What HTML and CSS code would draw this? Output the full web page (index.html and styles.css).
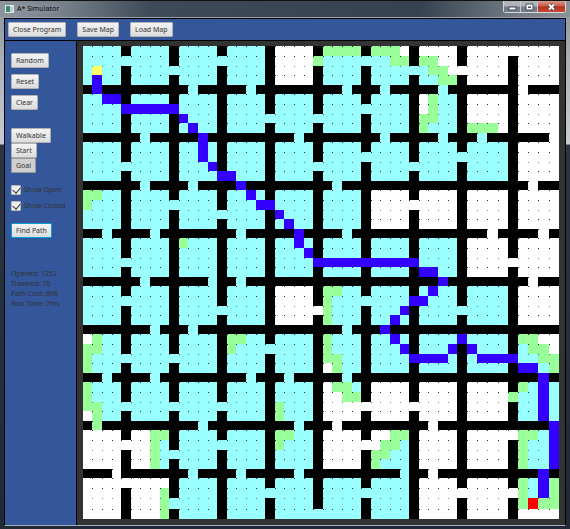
FILE: index.html
```html
<!DOCTYPE html>
<html lang="en">
<head>
<meta charset="utf-8">
<title>A* Simulator</title>
<link rel="stylesheet" href="styles.css">
</head>
<body>
<div class="window">
  <header class="titlebar">
    <svg class="app-icon" viewBox="0 0 9 8" aria-hidden="true">
      <rect width="9" height="8" fill="#e4e6e6"/>
      <rect x="1" y="1" width="4" height="6" fill="#3f8a6c"/>
      <rect x="5" y="2" width="3" height="5" fill="#b9cfe0"/>
    </svg>
    <h1 class="title">A* Simulator</h1>
    <div class="controls">
      <button class="control" type="button" aria-label="Minimize">
        <svg viewBox="0 0 9 8"><rect x="1" y="4" width="7" height="3" fill="#fff" stroke="#454b55"/></svg>
      </button>
      <button class="control" type="button" aria-label="Maximize">
        <svg viewBox="0 0 9 8"><path d="M1 1h7v6H1z" fill="#fff" stroke="#454b55"/><path d="M3 3.500h3v1.500H3z" fill="#454b55"/></svg>
      </button>
      <button class="control control-close" type="button" aria-label="Close">
        <svg viewBox="0 0 9 8"><path d="M2 1.500l5 5M7 1.500l-5 5" stroke="#454b55" stroke-width="3.400"/><path d="M2 1.500l5 5M7 1.500l-5 5" stroke="#fff" stroke-width="1.800"/></svg>
      </button>
    </div>
  </header>
  <div class="client">
    <nav class="toolbar">
      <button class="btn" type="button">Close Program</button>
      <button class="btn" type="button">Save Map</button>
      <button class="btn" type="button">Load Map</button>
    </nav>
    <div class="content">
      <aside class="sidebar">
        <div class="actions">
          <button class="btn" type="button">Random</button>
          <button class="btn" type="button">Reset</button>
          <button class="btn" type="button">Clear</button>
        </div>
        <div class="modes">
          <button class="btn" type="button">Walkable</button>
          <button class="btn" type="button">Start</button>
          <button class="btn btn-pressed" type="button" aria-pressed="true">Goal</button>
        </div>
        <div class="options">
          <label class="option"><input class="check" type="checkbox" checked>Show Open</label>
          <label class="option"><input class="check" type="checkbox" checked>Show Closed</label>
        </div>
        <button class="btn btn-focus" type="button">Find Path</button>
        <div class="stats">
          <p>Opened: 1252</p>
          <p>Traveled: 76</p>
          <p>Path Cost: 896</p>
          <p>Run Time: 7ms</p>
        </div>
      </aside>
      <main class="board">
        <svg class="map" viewBox="0 0 476 473" role="img" aria-label="Map" shape-rendering="crispEdges"></svg>
      </main>
    </div>
  </div>
</div>
<script src="map.js"></script>
</body>
</html>
```
FILE: styles.css
```css
* {
  box-sizing: border-box;
}

body {
  margin: 0;
  font-family: "Noto Sans", "Open Sans", sans-serif;
  font-size: 7px;
  line-height: 10px;
  color: #333;
}

.window {
  display: flex;
  flex-direction: column;
  min-height: 100vh;
  padding: 0 4px 3px;
  border-top: 1px solid #111;
  background: linear-gradient(#8b9299 0, #aab0b6 60px, #c8ccd2 143px, #2b3643 144px, #1f2a36 100%);
}

.titlebar {
  display: flex;
  align-items: center;
  height: 17px;
  margin: 0 -4px;
  padding-left: 5px;
  border-bottom: 1px solid #97a3ad;
  background: linear-gradient(90deg, #8d959d 0, #79828b 60px, #3e4a57 150px, #36424f 420px, #68727b 500px, #8a9299 100%);
}

.app-icon {
  width: 9px;
  height: 8px;
}

.title {
  flex: 1;
  margin: 0 0 0 3px;
  font-size: 7px;
  font-weight: 400;
  color: #000;
  text-shadow: 0 0 4px #b4bcc4;
}

.controls {
  display: flex;
  align-self: flex-start;
  height: 12px;
  margin-right: 4px;
  border: 1px solid #d5d9dd;
  border-top: 0;
  border-radius: 0 0 3px 3px;
}

.control {
  display: flex;
  align-items: center;
  justify-content: center;
  width: 17px;
  padding: 0;
  border: 0;
  border-right: 1px solid #c5cad0;
  background: linear-gradient(#b0b5ba 0 45%, #747c85 55%);
}

.control svg {
  width: 9px;
  height: 8px;
  fill: none;
}

.control-close {
  width: 27px;
  border-right: 0;
  background: linear-gradient(#d99a8c 0, #cc6551 40%, #b3311c 55%, #c64a34);
}

.client {
  flex: 1;
  display: flex;
  flex-direction: column;
  border: 1px solid #000;
  border-bottom-color: #a4adb8;
  background: #333;
}

.toolbar {
  display: flex;
  align-items: center;
  gap: 11px;
  height: 22px;
  padding: 0 3px;
  border-bottom: 1px solid #000;
  background: #34569b;
}

.btn {
  display: block;
  height: 15px;
  padding: 0 4px;
  border: 1px solid #b2b2b2;
  border-radius: 1px;
  background: linear-gradient(#f4f4f4, #dcdcdc);
  color: #333;
  font: inherit;
  white-space: nowrap;
}

.btn-pressed {
  border-color: #999;
  background: #cfcfcf;
}

.btn-focus {
  border-color: #039ed3;
}

.content {
  flex: 1;
  display: flex;
}

.sidebar {
  display: flex;
  flex-direction: column;
  align-items: flex-start;
  width: 72px;
  padding: 12px 0 0 6px;
  border-right: 1px solid #000;
  background: #34569b;
}

.actions {
  display: grid;
  justify-items: start;
  gap: 6px;
}

.modes {
  display: grid;
  justify-items: start;
  margin: 18px 0 12px;
}

.options {
  display: grid;
  gap: 6px;
  margin-bottom: 12px;
}

.option {
  display: flex;
  align-items: center;
  gap: 3px;
  white-space: nowrap;
}

.check {
  appearance: none;
  display: grid;
  place-items: center;
  width: 10px;
  height: 10px;
  margin: 0;
  border: 1px solid #b8b8b8;
  border-radius: 1px;
  background: #eee;
}

.check:checked::before {
  content: "";
  width: 4px;
  height: 6px;
  margin-bottom: 2px;
  border: solid #333;
  border-width: 0 1px 1px 0;
  transform: rotate(40deg);
}

.stats {
  margin-top: 31px;
}

.stats p {
  margin: 0;
}

.board {
  flex: 1;
  min-width: 0;
  padding: 5px 6px;
}

.map {
  display: block;
  width: 100%;
  height: auto;
}
```
FILE: map.js
```javascript
// 10 x 10 rooms of 4 x 4 cells, parted by walls one cell thick.
const SIZE = 49;
const COLORS = { '.': '#ffffff', c: '#99ffff', g: '#99ff99', '#': '#000000', b: '#3300ff', y: '#ffff66', r: '#ff0000' };

const ROOMS = [
  'cccc.cc...',
  'ccccccc...',
  'ccccccccc.',
  'cccccc....',
  'cccccccc..',
  'cccc.cccc.',
  'cccccccccc',
  'ccccc....c',
  '..ccc.c..c',
  '..ccccc..c'
];

// Each patch is a row, a first column and the cells from there on.
const PATCHES = [
  [0, 25, 'gggg'], [0, 30, 'ggg.'], [0, 44, '.'],
  [1, 4, 'c'], [1, 14, 'c'], [1, 24, 'g'], [1, 29, 'c'], [1, 32, 'gg'], [1, 35, 'gg'],
  [2, 1, 'y'], [2, 9, 'c'], [2, 34, 'ccgg..'],
  [3, 1, 'b'], [3, 35, 'ccgg'],
  [4, 1, 'b'], [4, 11, 'c'], [4, 17, 'c'], [4, 27, 'c'], [4, 31, 'c'], [4, 37, 'c'], [4, 45, '.'],
  [5, 2, 'bb'], [5, 35, '.gcc'],
  [6, 4, 'bbbbbb'], [6, 29, 'c'], [6, 35, '.gcc'],
  [7, 10, 'b'], [7, 19, 'c'], [7, 24, 'c'], [7, 35, 'ggcc'],
  [8, 11, 'b'], [8, 35, 'gccc'], [8, 40, 'ggg'],
  [9, 6, 'c'], [9, 12, 'b'], [9, 22, 'c'], [9, 31, 'c'], [9, 37, 'c'], [9, 41, 'c'], [9, 48, '.'],
  [10, 12, 'b'],
  [11, 12, 'b'], [11, 29, 'c'], [11, 39, 'c'],
  [12, 4, 'c'], [12, 13, 'b'], [12, 24, 'c'], [12, 34, 'c'],
  [13, 14, 'bb'],
  [14, 6, 'c'], [14, 11, 'c'], [14, 16, 'b'], [14, 26, 'c'], [14, 46, '.'],
  [15, 0, 'gg'], [15, 17, 'b'],
  [16, 0, 'g'], [16, 9, 'c'], [16, 18, 'bb'], [16, 34, '.'],
  [17, 14, 'c'], [17, 20, 'b'],
  [18, 21, 'b'],
  [19, 2, 'c'], [19, 7, 'c'], [19, 16, 'c'], [19, 22, 'b'], [19, 27, 'c'], [19, 42, '.'], [19, 47, '.'],
  [20, 10, 'g'], [20, 22, 'b'],
  [21, 23, 'b'],
  [22, 4, 'c'], [22, 24, 'bbbbbbbbbbb'], [22, 44, '.'],
  [23, 35, 'bb'],
  [24, 6, 'c'], [24, 13, 'c'], [24, 16, 'c'], [24, 37, 'b'], [24, 46, '.'],
  [25, 25, 'gg'], [25, 36, 'b'],
  [26, 4, 'c'], [26, 25, 'g'], [26, 29, 'c'], [26, 34, 'bb'],
  [27, 14, 'c'], [27, 24, '.g'], [27, 33, 'b'], [27, 39, 'c'],
  [28, 25, 'g'], [28, 32, 'b'],
  [29, 7, 'c'], [29, 11, 'c'], [29, 27, 'c'], [29, 31, 'b'],
  [30, 0, '.g'], [30, 15, 'gg'], [30, 25, 'g'], [30, 32, 'b'], [30, 39, 'b'], [30, 45, 'gg..'],
  [31, 0, 'gg'], [31, 15, 'g'], [31, 19, 'c'], [31, 25, 'g'], [31, 33, 'b'], [31, 38, 'b'], [31, 40, 'b'], [31, 45, 'cgg.'],
  [32, 0, 'g'], [32, 4, 'c'], [32, 9, 'c'], [32, 25, 'gg'], [32, 34, 'bbbb'], [32, 41, 'bbbb'], [32, 47, 'gg'],
  [33, 0, 'g'], [33, 25, '.g'], [33, 45, 'bbcg'],
  [34, 2, 'c'], [34, 7, 'c'], [34, 17, 'c'], [34, 21, 'c'], [34, 27, 'c'], [34, 47, 'b'],
  [35, 0, 'g'], [35, 25, '.ggc'], [35, 45, 'gcbc'],
  [36, 0, 'g'], [36, 25, '..gg'], [36, 44, 'gccbc'],
  [37, 0, 'gg'], [37, 4, 'c'], [37, 9, 'c'], [37, 14, 'c'], [37, 20, 'g'], [37, 29, '.'], [37, 34, '.'], [37, 47, 'b'],
  [38, 0, '.g'], [38, 20, 'g'], [38, 47, 'b'],
  [39, 1, 'g'], [39, 12, 'c'], [39, 22, 'c'], [39, 26, '.'], [39, 36, '.'], [39, 48, 'b'],
  [40, 7, 'gg'], [40, 20, 'gg'], [40, 30, '..gg'], [40, 44, '.ggcb'],
  [41, 4, '.'], [41, 7, 'gc'], [41, 14, 'c'], [41, 20, 'g'], [41, 29, '..ggc'], [41, 45, 'gccb'],
  [42, 7, 'gcc'], [42, 30, 'ggcc'], [42, 45, 'gccb'],
  [43, 7, 'gc'], [43, 30, 'gccc'], [43, 45, 'gccb'],
  [44, 3, '.'], [44, 11, 'c'], [44, 16, 'c'], [44, 22, 'c'], [44, 33, 'c'], [44, 36, '.'], [44, 47, 'b'],
  [45, 4, '.'], [45, 45, 'gcbg'],
  [46, 8, 'g'], [46, 19, 'c'], [46, 29, 'c'], [46, 39, '.'], [46, 44, '.gcbg'],
  [47, 8, 'gc'], [47, 45, 'grgg'],
  [48, 8, 'g'], [48, 24, 'c'], [48, 45, '....']
];

const cells = Array.from({ length: SIZE }, (_, row) =>
  Array.from({ length: SIZE }, (_, col) =>
    row % 5 === 4 || col % 5 === 4 ? '#' : ROOMS[Math.floor(row / 5)][Math.floor(col / 5)]));

for (const [row, col, text] of PATCHES) {
  [...text].forEach((kind, i) => { cells[row][col + i] = kind; });
}

// Pixel edges of the cells; the last cells are a little larger.
const xEdge = i => i <= 40 ? Math.floor(i / 5) * 48 + [0, 9, 19, 29, 38][i % 5] : 384 + Math.round((i - 40) * 10.2);
const yEdge = i => i <= 45 ? Math.floor(i / 5) * 48 + [0, 10, 20, 29, 39][i % 5] : 432 + Math.round((i - 45) * 10.2);

const map = document.querySelector('.map');
const rect = (x, y, width, height, fill) => {
  const node = document.createElementNS('http://www.w3.org/2000/svg', 'rect');
  Object.entries({ x, y, width, height, fill }).forEach(([key, value]) => node.setAttribute(key, value));
  map.append(node);
};

for (let row = 0; row < SIZE; row++) {
  for (let col = 0; col < SIZE; col++) {
    const x = xEdge(col);
    const y = yEdge(row);
    rect(x, y, xEdge(col + 1) - x, yEdge(row + 1) - y, COLORS[cells[row][col]]);
  }
}

// Grid points between open cells.
for (let row = 0; row < SIZE; row++) {
  for (let col = 1; col < SIZE; col++) {
    if (cells[row][col] !== 'b' && cells[row][col - 1] !== 'b') {
      rect(xEdge(col), yEdge(row), 1, 1, row % 5 === 2 ? '#00000080' : '#000000cc');
    }
  }
}
```
